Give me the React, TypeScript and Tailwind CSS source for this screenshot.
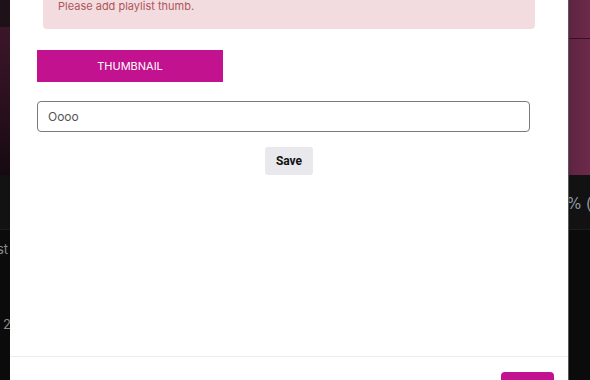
import React from "react";

const font = { fontFamily: "Inter, 'Noto Sans', sans-serif" };

const LeftStrip = () => (
  <div className="w-[10px] h-full flex flex-col shrink-0 overflow-hidden">
    <div className="h-[27px] bg-[#1e1218]" />
    <div className="h-[148px] bg-[linear-gradient(200deg,#3c1629_0%,#2a0f1d_55%,#150a10_100%)]" />
    <div className="h-[55px] bg-[#121212] border-b border-[#1d1d1d]" />
    <div className="flex-1 bg-[#0b0b0b] relative">
      <span className="absolute left-[-3px] top-[10px] text-[13px] text-[#8a8a8a]" style={font}>st</span>
      <span className="absolute left-[3px] top-[85px] text-[13px] text-[#8a8a8a]" style={font}>2</span>
    </div>
  </div>
);

const RightStrip = () => (
  <div className="w-[22px] h-full flex flex-col shrink-0 overflow-hidden border-l border-[#5a5a5a]">
    <div className="h-[175px] bg-[linear-gradient(90deg,#5e2340_0%,#6d2a4b_100%)] relative">
      <div className="absolute left-0 right-0 top-[38px] h-[1px] bg-[#3a1026]" />
    </div>
    <div className="h-[55px] bg-[#121212] border-b border-[#1d1d1d] relative">
      <span className="absolute left-[-2px] top-[18px] text-[15px] text-[#8e9aa6] whitespace-nowrap" style={{ fontFamily: "'DejaVu Sans', sans-serif" }}>% (1</span>
    </div>
    <div className="flex-1 bg-[#0b0b0b]" />
  </div>
);

export default function App() {
  return (
    <div className="w-[590px] h-[380px] flex overflow-hidden bg-[#0b0b0b]" style={font}>
      <LeftStrip />
      <div className="w-[558px] h-full bg-white flex flex-col shrink-0">
        <div className="flex-1 flex flex-col px-[27px]">
          <div className="mx-[6px] h-[29px] bg-[#f2dcdf] rounded-b-[4px] pl-[15px]">
            <p className="text-[11px] leading-[12px] text-[#b0555a]">Please add playlist thumb.</p>
          </div>
          <button className="mt-[21px] w-[186px] h-[32px] bg-[#c2128f] text-white text-[11px] flex items-center justify-center">
            THUMBNAIL
          </button>
          <div className="mt-[19px] w-[493px] h-[31px] border border-[#7a7a7a] rounded-[4px] flex items-center px-[10px] text-[12px] text-[#555555]">
            Oooo
          </div>
          <div className="mt-[15px] flex justify-center">
            <button className="w-[48px] h-[28px] rounded-[3px] bg-[#e8e8ed] text-[12px] font-bold text-[#111111]" style={{ fontFamily: "Roboto, Arial, sans-serif" }}>
              Save
            </button>
          </div>
        </div>
        <div className="h-[24px] border-t border-[#ededed] flex justify-end pr-[14px] pt-[15px]">
          <div className="w-[53px] h-[20px] bg-[#c2128f] rounded-t-[4px]" />
        </div>
      </div>
      <RightStrip />
    </div>
  );
}
